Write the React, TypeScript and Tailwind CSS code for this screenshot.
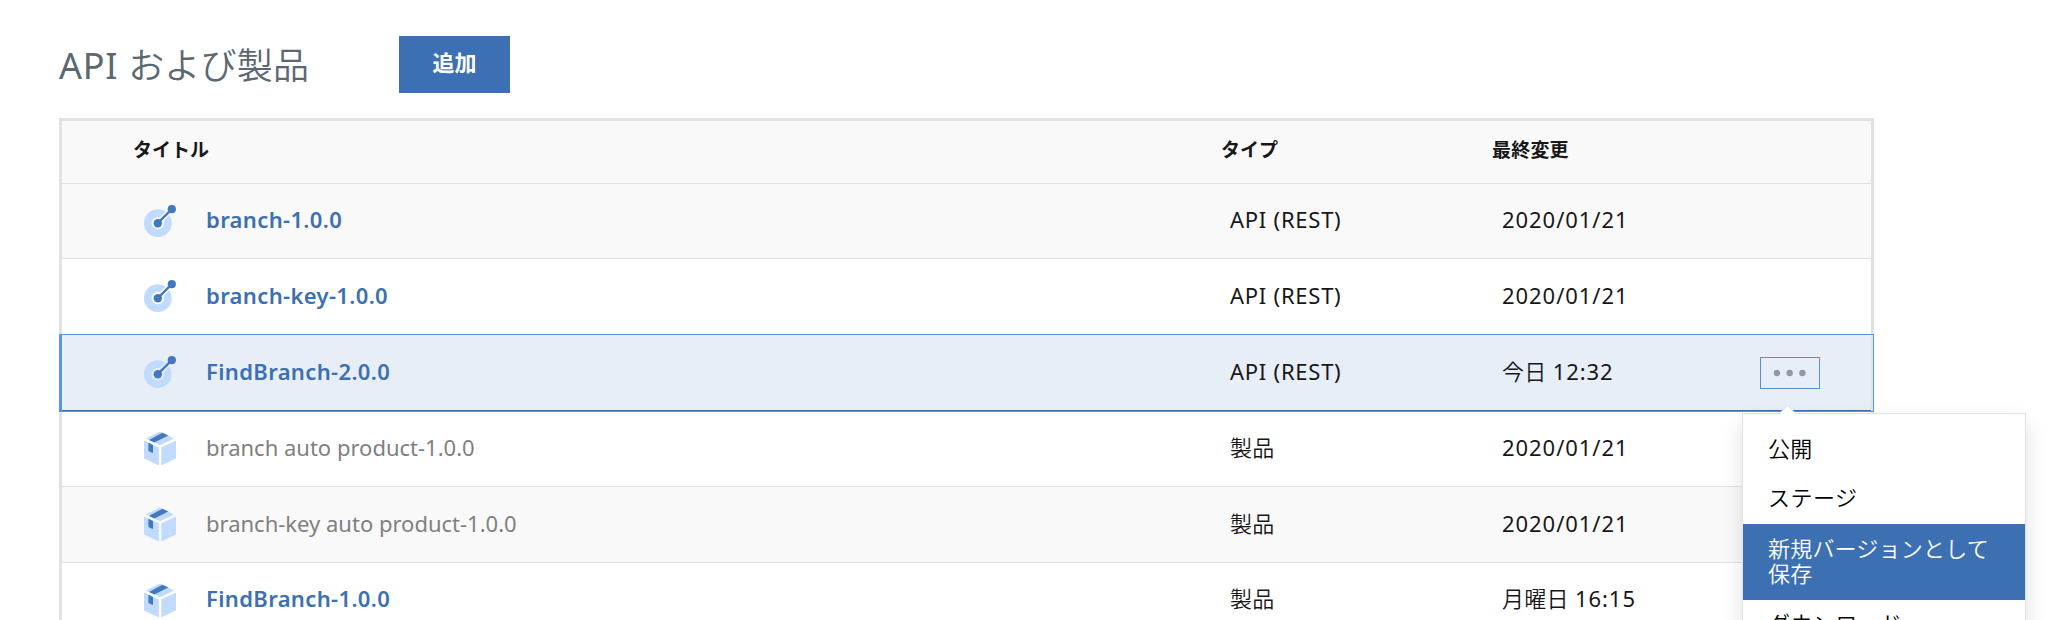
type Row = {
  kind: 'api' | 'product';
  title: string;
  link: boolean;
  type: string;
  day?: string;
  time: string;
  selected?: boolean;
};

const rows: Row[] = [
  { kind: 'api', title: 'branch-1.0.0', link: true, type: 'API (REST)', time: '2020/01/21' },
  { kind: 'api', title: 'branch-key-1.0.0', link: true, type: 'API (REST)', time: '2020/01/21' },
  { kind: 'api', title: 'FindBranch-2.0.0', link: true, type: 'API (REST)', day: '今日', time: '12:32', selected: true },
  { kind: 'product', title: 'branch auto product-1.0.0', link: false, type: '製品', time: '2020/01/21' },
  { kind: 'product', title: 'branch-key auto product-1.0.0', link: false, type: '製品', time: '2020/01/21' },
  { kind: 'product', title: 'FindBranch-1.0.0', link: true, type: '製品', day: '月曜日', time: '16:15' },
];

function ApiIcon({ backdrop }: { backdrop: string }) {
  return (
    <svg width="32" height="35" viewBox="0 0 32 35" className="block">
      <circle cx="13.8" cy="18.2" r="13.9" fill="#c0dbff" />
      <path d="M13.8 18.2 27.8 4.2" stroke={backdrop} strokeWidth="5.4" />
      <circle cx="13.8" cy="18.2" r="6.2" fill={backdrop} />
      <path d="M13.8 18.2 27.8 4.2" stroke="#4178be" strokeWidth="2.4" />
      <circle cx="13.8" cy="18.2" r="4.2" fill="#4178be" />
      <circle cx="27.8" cy="4.2" r="4.1" fill="#4178be" />
    </svg>
  );
}

function ProductIcon() {
  return (
    <svg width="32" height="35" viewBox="0 0 32 35" className="block">
      <path d="M16 .4 30 7.5 16 14.3 2 7.5Z" fill="#c0dbff" />
      <path d="M0 9.6 14.8 16.4V34.6L0 27.4Z" fill="#c0dbff" />
      <path d="M17.3 16.4 32 9.6V27.4L17.3 34.6Z" fill="#c0dbff" />
      <path d="M5 9 18.4 1.7 24.4 4.5 10.4 11.5Z" fill="#4178be" />
      <path d="M4.4 11.7 9 14V22L6.8 21.3 4.4 19.8Z" fill="#4178be" />
    </svg>
  );
}

function RowMenu() {
  return (
    <div className="absolute left-[1742px] top-[413px] z-20 w-[284px] border border-[#dfe3e6] bg-white pt-[10px] text-[22px] font-[350] leading-[25px] tracking-[0.2px] text-black shadow-[0_10px_20px_rgba(0,0,0,0.12)]">
      <svg className="absolute left-[36px] top-[-9px]" width="18" height="10" viewBox="0 0 18 10">
        <path d="M0 9 8.5 .7 17 9V10H0Z" fill="#fff" />
        <path d="M0 8.6 8.5 .5 17 8.6" fill="none" stroke="#dfe3e6" />
      </svg>
      <div className="h-[50px] px-[25px] pt-[12px]">公開</div>
      <div className="h-[50px] px-[25px] pt-[11px] tracking-[0.5px]">ステージ</div>
      <div className="h-[76px] bg-[#3d70b2] px-[25px] pt-[12px] text-white">
        新規バージョンとして
        <br />
        保存
      </div>
      <div className="h-[50px] px-[25px] pt-[11px] tracking-[0.4px]">ダウンロード</div>
    </div>
  );
}

function TableRow({ row, index }: { row: Row; index: number }) {
  const striped = index % 4 === 0;
  const bg = row.selected ? 'z-10 bg-[#e8eef8]' : striped ? 'bg-[#f9f9f9]' : 'bg-white';
  const backdrop = row.selected ? '#e8eef8' : striped ? '#f9f9f9' : '#ffffff';
  const height = index === 0 ? 'h-[75px]' : 'h-[76px]';
  const line = row.selected ? 'border-[#3d70b2]' : index === 1 ? 'border-[#5596e6]' : 'border-[#dfe3e6]';
  const pad = index === 0 || index === 5 ? 'pt-[19px]' : 'pt-[20px]';
  return (
    <div className={`relative grid grid-cols-[82px_62px_1024px_272px_258px_1fr] border-b leading-[32px] ${bg} ${height} ${line}`}>
      {row.selected && (
        <>
          <div className="pointer-events-none absolute -right-[3px] bottom-[-1px] top-0 w-[3px] bg-[#dfe3e6]" />
          <div className="pointer-events-none absolute -inset-x-[3px] -bottom-[2px] -top-px border border-l-[3px] border-[#5596e6]" />
        </>
      )}
      <div />
      <div className={row.kind === 'api' ? 'pt-[21px]' : 'pt-[20px]'}>
        {row.kind === 'api' ? <ApiIcon backdrop={backdrop} /> : <ProductIcon />}
      </div>
      <div className={`${pad} ${row.link ? 'font-semibold tracking-[0.36px] text-[#3d70b2]' : 'text-[#808080]'}`}>
        {row.title}
      </div>
      <div className={`${pad} ${row.kind === 'api' ? 'tracking-[0.75px]' : 'font-[350] tracking-[0.2px]'}`}>{row.type}</div>
      <div className={pad}>
        {row.day && <span className="font-[350] tracking-[0.3px]">{row.day} </span>}
        <span className="tracking-[0.95px]">{row.time}</span>
      </div>
      <div className="pt-[22px]">
        {row.selected && (
          <button className="flex h-8 w-[60px] items-center justify-center border border-[#5a8fcb]">
            <svg width="34" height="8" viewBox="0 0 34 8">
              <circle cx="4" cy="4" r="3.2" fill="#8c9ba5" />
              <circle cx="16.7" cy="4" r="3.2" fill="#8c9ba5" />
              <circle cx="29.4" cy="4" r="3.2" fill="#8c9ba5" />
            </svg>
          </button>
        )}
      </div>
    </div>
  );
}

export default function App() {
  return (
    <div
      lang="ja"
      className="relative h-[620px] w-[2050px] overflow-hidden bg-white pl-[59px] pt-[36px] font-['Noto_Sans','Noto_Sans_CJK_JP',sans-serif] text-[22px] text-[#171717]"
    >
      <header className="flex h-[82px] items-start">
        <h1 className="w-[340px] whitespace-nowrap pt-[7px] text-[36px] font-[350] leading-[46px] text-[#5a6872]">
          <span className="font-normal tracking-[0.7px]">API </span>
          <span className="tracking-[0.2px]">および製品</span>
        </h1>
        <button className="h-[57px] w-[111px] bg-[#3d70b2] pb-[6px] text-[22px] font-semibold leading-[30px] text-white">追加</button>
      </header>
      <main className="h-[560px] w-[1815px] border-[3px] border-[#dfe3e6]">
        <div className="grid h-[63px] grid-cols-[1159px_271px_1fr] border-b border-[#dfe3e6] bg-[#f9f9f9] text-[19px] font-semibold leading-[28px]">
          <div className="pl-[71px] pt-[15px]">タイトル</div>
          <div className="pt-[15px]">タイプ</div>
          <div className="pt-[15px] tracking-[0.2px]">最終変更</div>
        </div>
        {rows.map((row, i) => (
          <TableRow key={row.title} row={row} index={i} />
        ))}
      </main>
      <RowMenu />
    </div>
  );
}
